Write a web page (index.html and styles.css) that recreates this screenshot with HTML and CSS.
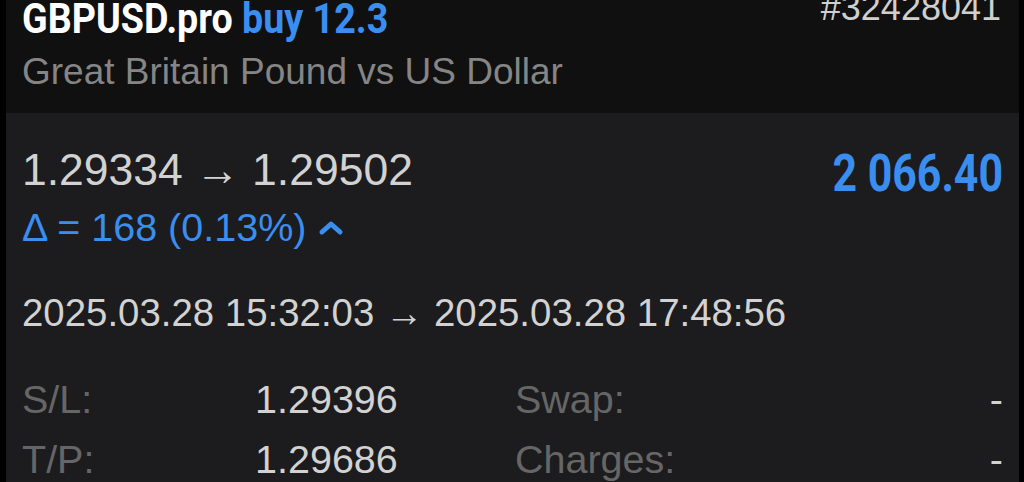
FILE: index.html
```html
<html>
  <head>
    <link rel="stylesheet" href="styles.css">
    <title>Position</title>
  </head>
<body>
  <div class="screen">

    <div class="header">
      <div class="title-row">
        <div class="title">GBPUSD.pro <span class="blue">buy 12.3</span></div>
        <div class="ticket">#32428041</div>
      </div>
      <div class="symbol-desc">Great Britain Pound vs US Dollar</div>
    </div>

    <div class="details">
      <div class="price-row">
        <div class="prices">1.29334 &rarr; 1.29502</div>
        <div class="profit">2 066.40</div>
      </div>

      <div class="delta">
        &Delta; = 168 (0.13%)
        <svg class="chevron" width="26" height="16" viewBox="0 0 26 16">
          <path d="M4 12 L13 4 L22 12" fill="none" stroke="#3a8ef0" stroke-width="5" stroke-linecap="round" stroke-linejoin="round"/>
        </svg>
      </div>

      <div class="times">2025.03.28 15:32:03 &rarr; 2025.03.28 17:48:56</div>

      <div class="grid">
        <span class="label">S/L:</span>
        <span class="value">1.29396</span>
        <span class="label">Swap:</span>
        <span class="value dash">-</span>

        <span class="label">T/P:</span>
        <span class="value">1.29686</span>
        <span class="label">Charges:</span>
        <span class="value dash">-</span>
      </div>
    </div>

  </div>
</body>
</html>
```

FILE: styles.css
```css
body {
  margin: 0;
  background: #000;
  font-family: "Liberation Sans", Arial, sans-serif;
  overflow: hidden;
}

.screen {
  margin: 0 5px 0 6px;
  height: 482px;
  background: #1c1c1e;
}

.header {
  height: 113px;
  background: #101010;
  padding: 0 18px 0 16px;
  box-sizing: border-box;
}

.title-row {
  display: flex;
  justify-content: space-between;
  align-items: flex-start;
}

/* condensed look: no narrow face installed, so squeeze Roboto */
.title {
  display: inline-block;
  font-family: Roboto, sans-serif;
  font-weight: bold;
  font-size: 43px;
  line-height: 44px;
  color: #fff;
  margin-top: -4px;
  transform: scaleX(0.875);
  transform-origin: left center;
}

.blue {
  color: #3a8ef0;
}

.ticket {
  font-size: 36px;
  line-height: 36px;
  color: #cfcfcf;
  margin-top: -10px;
}

.symbol-desc {
  font-size: 37px;
  line-height: 40px;
  color: #858585;
  margin-top: 12px;
}

.details {
  padding: 28px 16px 0 16px;
}

.price-row {
  display: flex;
  justify-content: space-between;
  align-items: center;
}

.prices {
  font-size: 44.5px;
  line-height: 50px;
  color: #d2d2d2;
}

.profit {
  font-family: Roboto, sans-serif;
  font-weight: bold;
  font-size: 51px;
  line-height: 50px;
  color: #3a8ef0;
  margin-top: 8px;
  transform: scaleX(0.84);
  transform-origin: right center;
}

.delta {
  display: flex;
  align-items: center;
  gap: 12px;
  font-size: 39.5px;
  line-height: 44px;
  color: #3a8ef0;
  margin-top: 6px;
}

.chevron {
  margin-top: 2px;
}

.times {
  font-size: 38.4px;
  line-height: 44px;
  color: #d2d2d2;
  margin-top: 42px;
}

.grid {
  display: grid;
  grid-template-columns: 233px 260px 1fr auto;
  row-gap: 16px;
  margin-top: 42px;
  font-size: 39.5px;
  line-height: 44px;
}

.label {
  color: #666;
}

.value {
  color: #d2d2d2;
}

.dash {
  text-align: right;
}
```
